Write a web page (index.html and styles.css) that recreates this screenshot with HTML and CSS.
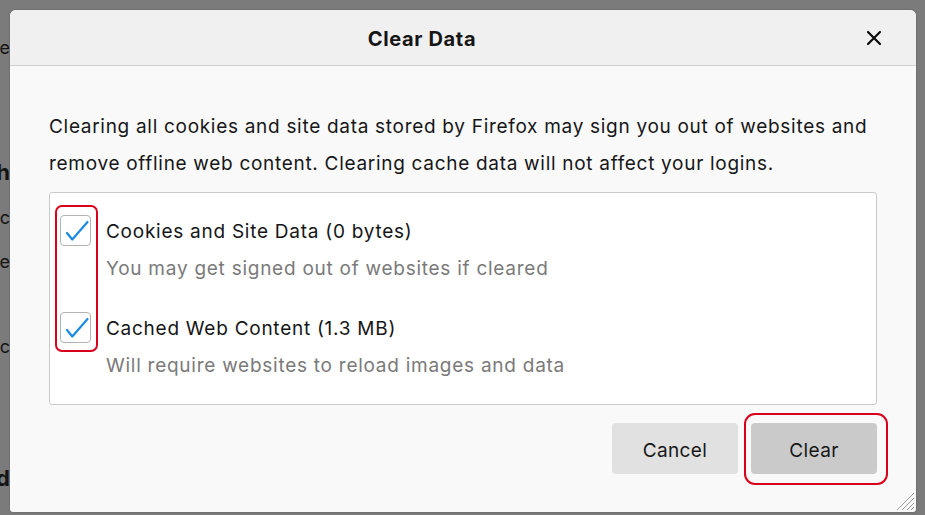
FILE: index.html
```html
<!DOCTYPE html>
<html lang="en">
<head>
<meta charset="utf-8">
<title>Clear Data</title>
<link rel="stylesheet" href="styles.css">
</head>
<body>
<div class="page">
  <div class="bg-line l1"><span>Manage</span></div>
  <div class="bg-line l2 strong"><span>Search</span></div>
  <div class="bg-line l3"><span>Basic</span></div>
  <div class="bg-line l4"><span>Store</span></div>
  <div class="bg-line l5"><span>Public</span></div>
  <div class="bg-line l6 strong"><span>Blocked</span></div>
</div>

<div class="dialog">
  <div class="dialog-header">
    <span class="title">Clear Data</span>
    <svg class="close" width="16" height="16" viewBox="0 0 16 16" aria-hidden="true">
      <path d="M2 2 L14 14 M14 2 L2 14" stroke="#0c0c0d" stroke-width="2.2" stroke-linecap="round" fill="none"/>
    </svg>
  </div>
  <div class="dialog-body">
    <p class="intro">Clearing all cookies and site data stored by Firefox may sign you out of websites and remove offline web content. Clearing cache data will not affect your logins.</p>
    <div class="options">
      <div class="option first">
        <span class="checkbox"><svg width="31" height="31" viewBox="0 0 31 31"><path d="M7 18 L12.3 24.5 L27.5 7" stroke="#1a8ae6" stroke-width="2.2" stroke-linecap="round" stroke-linejoin="round" fill="none"/></svg></span>
        <span class="label">Cookies and Site Data (0 bytes)</span>
        <span class="desc">You may get signed out of websites if cleared</span>
      </div>
      <div class="option">
        <span class="checkbox"><svg width="31" height="31" viewBox="0 0 31 31"><path d="M7 18 L12.3 24.5 L27.5 7" stroke="#1a8ae6" stroke-width="2.2" stroke-linecap="round" stroke-linejoin="round" fill="none"/></svg></span>
        <span class="label">Cached Web Content (1.3 MB)</span>
        <span class="desc">Will require websites to reload images and data</span>
      </div>
      <div class="mark mark-checks"></div>
    </div>
    <div class="footer">
      <button class="btn">Cancel</button>
      <button class="btn primary">Clear</button>
      <div class="mark mark-clear"></div>
    </div>
  </div>
  <svg class="grip" width="20" height="20" viewBox="0 0 20 20" aria-hidden="true">
    <path d="M2 19 L19 2 M7 19 L19 7 M12 19 L19 12 M16 19 L19 16" stroke="#9a9a9a" stroke-width="1" fill="none"/>
  </svg>
</div>
</body>
</html>
```

FILE: styles.css
```css
html, body {
  margin: 0;
  padding: 0;
}

body {
  width: 925px;
  height: 515px;
  overflow: hidden;
  background: #7b7b7b;
  font-family: Inter, "Noto Sans", "Liberation Sans", sans-serif;
  color: #161617;
  position: relative;
}

/* dimmed page behind the dialog */
.page {
  display: flex;
  flex-direction: column;
  width: 10px;
}

.bg-line {
  display: flex;
  justify-content: flex-end;
  width: 10px;
  height: 24px;
  line-height: 24px;
  font-size: 18px;
  color: #141414;
  white-space: nowrap;
  overflow: hidden;
}

.bg-line.strong {
  height: 30px;
  line-height: 30px;
  font-size: 22px;
  font-weight: 700;
}

.bg-line span { flex: none; }

.l1 { margin-top: 36px; }
.l2 { margin-top: 97px; }
.l3 { margin-top: 19px; }
.l4 { margin-top: 20px; }
.l5 { margin-top: 61px; }
.l6 { margin-top: 104px; }

/* dialog */
.dialog {
  position: absolute;
  left: 10px;
  top: 10px;
  width: 906px;
  height: 502px;
  background: #f9f9f9;
  border-radius: 6px 6px 3px 3px;
  overflow: hidden;
  box-shadow: 0 0 2px rgba(0, 0, 0, 0.25);
}

.dialog-header {
  height: 55px;
  background: #f0f0f0;
  border-bottom: 1px solid #cfcfcf;
  display: flex;
  align-items: center;
  justify-content: center;
  padding-right: 82px;
  position: relative;
}

.title {
  font-size: 20px;
  font-weight: 700;
  letter-spacing: 0.65px;
  margin-top: 3px;
}

.close {
  position: absolute;
  right: 34px;
  top: 20px;
}

.dialog-body {
  padding: 42px 39px 0 39px;
}

.intro {
  margin: 0;
  font-size: 19px;
  line-height: 37px;
  letter-spacing: 0.7px;
}

.options {
  position: relative;
  margin-top: 10px;
  height: 213px;
  background: #fff;
  border: 1px solid #c9c9c9;
  border-radius: 3px;
  padding: 22px 10px 0 10px;
  box-sizing: border-box;
}

.option {
  display: grid;
  grid-template-columns: 31px 1fr;
  column-gap: 15px;
  row-gap: 8px;
  margin-top: 29px;
}

.option.first { margin-top: 0; }

.checkbox {
  width: 31px;
  height: 31px;
  box-sizing: border-box;
  border: 1px solid #b3b3b3;
  border-radius: 4px;
  background: #fff;
  display: flex;
  align-items: center;
  justify-content: center;
}

.checkbox svg {
  flex: none;
}

.label {
  font-size: 19px;
  line-height: 31px;
  letter-spacing: 0.74px;
  padding-top: 1px;
}

.desc {
  grid-column: 2;
  font-size: 19px;
  line-height: 28px;
  letter-spacing: 0.74px;
  color: #7a7a7a;
}

.footer {
  position: relative;
  display: flex;
  justify-content: flex-end;
  gap: 13px;
  margin-top: 18px;
}

.btn {
  width: 126px;
  height: 51px;
  border: none;
  border-radius: 4px;
  background: #e1e1e1;
  font-family: inherit;
  font-size: 19px;
  letter-spacing: 0.4px;
  color: #161617;
  padding: 3px 0 0 0;
}

.btn.primary {
  background: #cacaca;
}

/* red annotation outlines */
.mark {
  position: absolute;
  border: 2px solid #d9001b;
  box-sizing: border-box;
}

.mark-checks {
  left: 5px;
  top: 12px;
  width: 43px;
  height: 147px;
  border-radius: 7px;
}

.mark-clear {
  right: -11px;
  top: -10px;
  width: 144px;
  height: 72px;
  border-radius: 11px;
}

.grip {
  position: absolute;
  right: 1px;
  bottom: 1px;
}
```
